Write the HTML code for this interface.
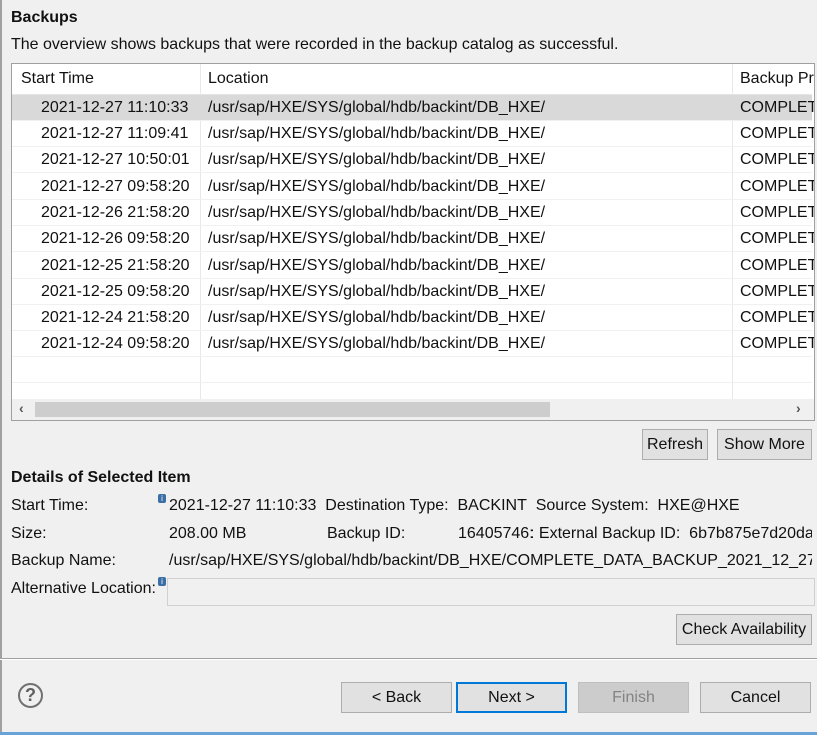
<!DOCTYPE html>
<html><head><style>
*{margin:0;padding:0;box-sizing:border-box}
body{width:817px;height:735px;background:#f0f0f0;font-family:"Liberation Sans",sans-serif;font-size:16px;color:#111;position:relative;overflow:hidden}
.a{position:absolute;white-space:nowrap}
.b{font-weight:bold}
.tbl{position:absolute;left:11px;top:63px;width:804px;height:358px;border:1px solid #a0a0a0;background:#fff;overflow:hidden}
.row{position:absolute;left:0;width:800px;height:26px;border-bottom:1px solid #eef0f2}
.row span{position:absolute;top:4px;white-space:nowrap}
.btn{position:absolute;border:1px solid #adadad;background:#e1e1e1;text-align:center;font-size:16px;line-height:29px}
</style></head><body>
<div class="a" style="left:0;top:0;width:2px;height:735px;background:#a0a0a0"></div>
<div class="a b" style="left:11px;top:9px">Backups</div>
<div class="a" style="left:11px;top:36px">The overview shows backups that were recorded in the backup catalog as successful.</div>
<div class="tbl">
 <div class="row" style="top:0;height:31px;border-bottom:1px solid #e5e5e5">
  <span style="left:9px;top:6px">Start Time</span><span style="left:196px;top:6px">Location</span><span style="left:728px;top:6px">Backup Pr</span>
 </div>
 <div class="a" style="left:188px;top:0;width:1px;height:340px;background:#e5e8ec"></div>
 <div class="a" style="left:720px;top:0;width:1px;height:340px;background:#e5e8ec"></div>
 <div class="row" style="top:31px;background:#d9d9d9"><span style="left:29px">2021-12-27 11:10:33</span><span style="left:196px">/usr/sap/HXE/SYS/global/hdb/backint/DB_HXE/</span><span style="left:728px">COMPLET</span></div>
 <div class="row" style="top:57px"><span style="left:29px">2021-12-27 11:09:41</span><span style="left:196px">/usr/sap/HXE/SYS/global/hdb/backint/DB_HXE/</span><span style="left:728px">COMPLET</span></div>
 <div class="row" style="top:83px"><span style="left:29px">2021-12-27 10:50:01</span><span style="left:196px">/usr/sap/HXE/SYS/global/hdb/backint/DB_HXE/</span><span style="left:728px">COMPLET</span></div>
 <div class="row" style="top:110px"><span style="left:29px">2021-12-27 09:58:20</span><span style="left:196px">/usr/sap/HXE/SYS/global/hdb/backint/DB_HXE/</span><span style="left:728px">COMPLET</span></div>
 <div class="row" style="top:136px"><span style="left:29px">2021-12-26 21:58:20</span><span style="left:196px">/usr/sap/HXE/SYS/global/hdb/backint/DB_HXE/</span><span style="left:728px">COMPLET</span></div>
 <div class="row" style="top:162px"><span style="left:29px">2021-12-26 09:58:20</span><span style="left:196px">/usr/sap/HXE/SYS/global/hdb/backint/DB_HXE/</span><span style="left:728px">COMPLET</span></div>
 <div class="row" style="top:189px"><span style="left:29px">2021-12-25 21:58:20</span><span style="left:196px">/usr/sap/HXE/SYS/global/hdb/backint/DB_HXE/</span><span style="left:728px">COMPLET</span></div>
 <div class="row" style="top:215px"><span style="left:29px">2021-12-25 09:58:20</span><span style="left:196px">/usr/sap/HXE/SYS/global/hdb/backint/DB_HXE/</span><span style="left:728px">COMPLET</span></div>
 <div class="row" style="top:241px"><span style="left:29px">2021-12-24 21:58:20</span><span style="left:196px">/usr/sap/HXE/SYS/global/hdb/backint/DB_HXE/</span><span style="left:728px">COMPLET</span></div>
 <div class="row" style="top:267px"><span style="left:29px">2021-12-24 09:58:20</span><span style="left:196px">/usr/sap/HXE/SYS/global/hdb/backint/DB_HXE/</span><span style="left:728px">COMPLET</span></div>
 <div class="row" style="top:293px"></div>
 <div class="a" style="left:0;top:335px;width:802px;height:21px;background:#f0f0f0"></div>
 <div class="a" style="left:23px;top:338px;width:515px;height:15px;background:#cdcdcd"></div>
 <div class="a" style="left:7px;top:336px;font-size:14px;color:#555;font-weight:bold">&lsaquo;</div>
 <div class="a" style="left:784px;top:336px;font-size:14px;color:#555;font-weight:bold">&rsaquo;</div>
</div>
<div class="btn" style="left:642px;top:429px;width:66px;height:31px">Refresh</div>
<div class="btn" style="left:717px;top:429px;width:95px;height:31px">Show More</div>
<div class="a b" style="left:11px;top:469px">Details of Selected Item</div>
<div class="a" style="left:11px;top:497px">Start Time:</div>
<div class="a" style="left:158px;top:494px;width:8px;height:9px;background:#3b6ea5;border-radius:2px;color:#fff;font-size:8px;line-height:9px;text-align:center">i</div>
<div class="a" style="left:169px;top:497px">2021-12-27 11:10:33&nbsp; Destination Type:&nbsp; BACKINT&nbsp; Source System:&nbsp; HXE@HXE</div>
<div class="a" style="left:11px;top:525px">Size:</div>
<div class="a" style="left:169px;top:525px">208.00 MB</div>
<div class="a" style="left:327px;top:525px">Backup ID:</div>
<div class="a" style="left:458px;top:525px;width:78px;overflow:hidden">16405746:</div>
<div class="a" style="left:530px;top:525px;width:282px;overflow:hidden">: External Backup ID:&nbsp; 6b7b875e7d20da</div>
<div class="a" style="left:11px;top:552px">Backup Name:</div>
<div class="a" style="left:169px;top:552px;width:643px;overflow:hidden">/usr/sap/HXE/SYS/global/hdb/backint/DB_HXE/COMPLETE_DATA_BACKUP_2021_12_27_1</div>
<div class="a" style="left:11px;top:580px">Alternative Location:</div>
<div class="a" style="left:158px;top:577px;width:8px;height:9px;background:#3b6ea5;border-radius:2px;color:#fff;font-size:8px;line-height:9px;text-align:center">i</div>
<div class="a" style="left:167px;top:578px;width:648px;height:28px;border:1px solid #d0d0d0;background:#f0f0f0"></div>
<div class="btn" style="left:676px;top:614px;width:136px;height:31px">Check Availability</div>
<div class="a" style="left:0;top:658px;width:817px;height:1px;background:#a0a0a0"></div>
<div class="a" style="left:0;top:659px;width:817px;height:1px;background:#fff"></div>
<div class="a" style="left:18px;top:683px;width:25px;height:25px;border:2px solid #707070;border-radius:50%;text-align:center;font-weight:bold;font-size:18px;line-height:21px;color:#606060">?</div>
<div class="btn" style="left:341px;top:682px;width:111px;height:31px">&lt; Back</div>
<div class="btn" style="left:456px;top:682px;width:111px;height:31px;border:2px solid #0078d7;line-height:27px">Next &gt;</div>
<div class="btn" style="left:578px;top:682px;width:111px;height:31px;background:#cccccc;border-color:#bfbfbf;color:#838383">Finish</div>
<div class="btn" style="left:700px;top:682px;width:111px;height:31px">Cancel</div>
<div class="a" style="left:0;top:732px;width:817px;height:3px;background:#6aa3d9"></div>
</body></html>
